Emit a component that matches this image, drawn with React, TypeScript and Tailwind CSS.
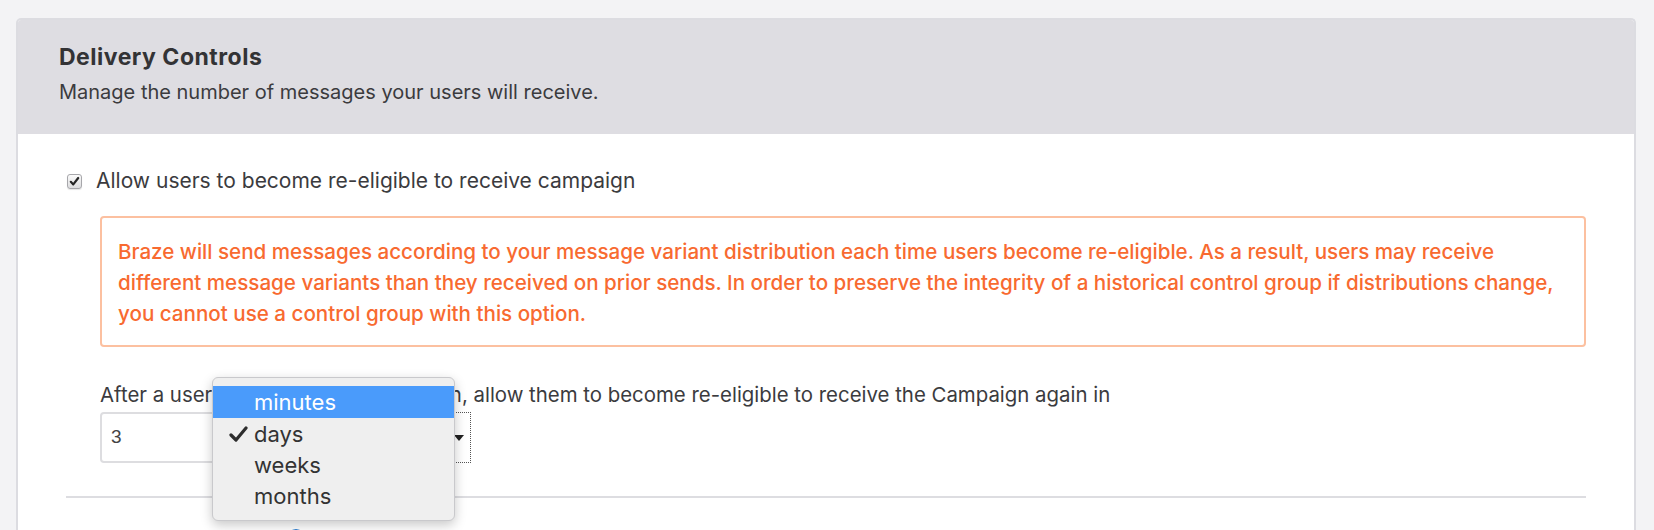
import React from "react";

const menuItems = [
  { label: "minutes", active: true, checked: false },
  { label: "days", active: false, checked: true },
  { label: "weeks", active: false, checked: false },
  { label: "months", active: false, checked: false },
];

export default function App() {
  return (
    <div className="min-h-screen bg-[#f3f3f5] pt-[18px] pl-[16px] pr-[18px] font-['Inter',sans-serif] text-[#3b3b3e]">
      <div className="rounded-t-[5px] border-2 border-b-0 border-[#dcdce1] bg-white overflow-hidden">
        <div className="bg-[#dedde2] h-[114px] pl-[41px] pt-[25px]">
          <div className="text-[23px] leading-[24px] font-bold tracking-[0.5px] text-[#333335]">Delivery Controls</div>
          <div className="mt-[11px] text-[20px] leading-[24px] text-[#3b3b3e]">
            Manage the number of messages your users will receive.
          </div>
        </div>
        <div className="px-[48px] pt-[35px]">
          <div className="flex items-center h-[24px] ml-[1px]">
            <div className="w-[15px] h-[15px] rounded-[3px] border border-[#a7a7ab] bg-gradient-to-b from-[#fbfbfb] to-[#dcdcde] flex items-center justify-center shadow-[0_1px_1px_rgba(0,0,0,0.1)]">
              <svg width="11" height="11" viewBox="0 0 11 11">
                <path d="M1.8 5.8 L4.3 8.4 L9.2 2" fill="none" stroke="#262626" strokeWidth="2.2" strokeLinecap="round" strokeLinejoin="round" />
              </svg>
            </div>
            <span className="ml-[14px] text-[21px] leading-[24px]">Allow users to become re-eligible to receive campaign</span>
          </div>

          <div className="mt-[23px] ml-[34px] rounded-[4px] border-2 border-[#fcc0a0] pl-[16px] pr-[10px] pt-[18px] pb-[16px] text-[20.6px] leading-[31px] font-medium text-[#f86a30]">
            Braze will send messages according to your message variant distribution each time users become re-eligible. As a result, users may receive
            <br />
            different message variants than they received on prior sends. In order to preserve the integrity of a historical control group if distributions change,
            <br />
            you cannot use a control group with this option.
          </div>

          <div className="relative ml-[34px] mt-[36px]">
            <div className="text-[20.4px] leading-[24px]">
              After a user has received a Campaign, allow them to become re-eligible to receive the Campaign again in
            </div>
            <div className="mt-[5px] flex items-center gap-[8px]">
              <div className="w-[130px] h-[51px] rounded-[4px] border-2 border-[#dddde0] flex items-center pl-[9px] font-['Liberation_Sans',sans-serif] text-[19px] text-[#444]">
                3
              </div>
              <div className="w-[233px] h-[51px] border border-dotted border-[#555] flex items-center justify-end pr-[6px]">
                <svg width="10" height="6" viewBox="0 0 10 6">
                  <path d="M0 0 L10 0 L5 6 Z" fill="#222" />
                </svg>
              </div>
            </div>

            <div className="absolute left-[112px] top-[-6px] w-[243px] rounded-[6px] bg-[#efefef] border border-[#c9c9cc] shadow-[0_4px_12px_rgba(0,0,0,0.22)] pt-[8px] pb-[9px]">
              {menuItems.map((it) => (
                <div
                  key={it.label}
                  className={
                    it.active
                      ? "h-[32px] flex items-center bg-[#4a9bfb] text-white"
                      : "h-[31px] flex items-center text-[#333]"
                  }
                >
                  <div className="w-[41px] flex justify-end pr-[6px]">
                    {it.checked ? (
                      <svg width="19" height="16" viewBox="0 0 19 16">
                        <path d="M2 9 L7 14 L17 2" fill="none" stroke="#2d2d2d" strokeWidth="3.2" strokeLinecap="round" strokeLinejoin="round" />
                      </svg>
                    ) : null}
                  </div>
                  <span className="text-[22px] leading-[24px]">{it.label}</span>
                </div>
              ))}
            </div>
          </div>

          <div className="mt-[33px] h-[2px] bg-[#dddde1]" />

          <div className="mt-[30px] flex items-center h-[20px]">
            <div className="w-[221px]" />
            <div className="w-[18px] h-[18px] rounded-full border-2 border-[#2f7fd0]" />
          </div>
          <div className="h-[40px]" />
        </div>
      </div>
    </div>
  );
}
